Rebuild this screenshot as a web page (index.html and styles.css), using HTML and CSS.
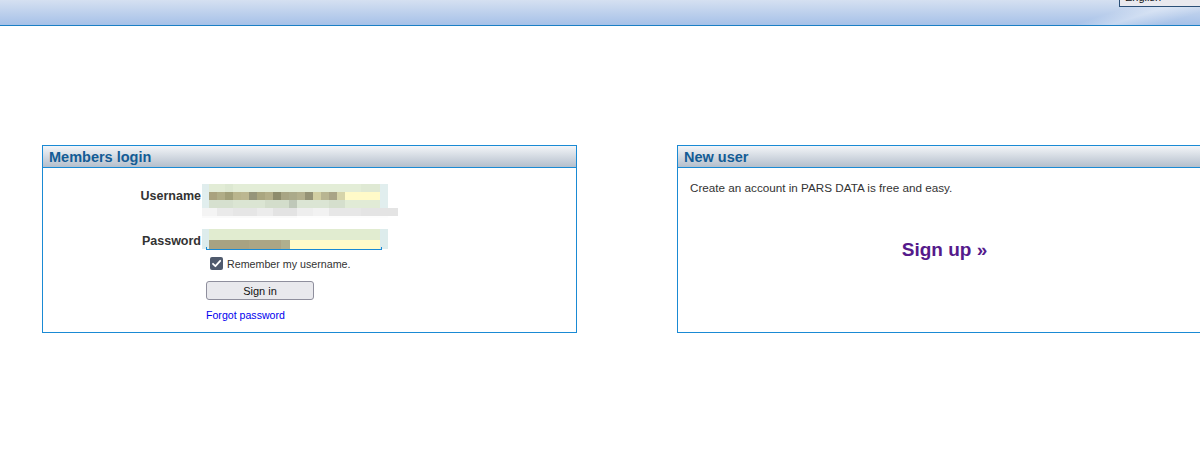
FILE: index.html
```html
<!DOCTYPE html>
<html lang="en">
<head>
    <meta charset="UTF-8">
    <title>Members login</title>
    <link rel="stylesheet" href="styles.css">
</head>
<body>
    <header class="topbar">
        <div class="lang-select">English</div>
    </header>

    <div class="panels">
        <div class="panel">
            <div class="panel-head">Members login</div>
            <div class="login-form">
                <label class="field-label user-label">Username</label>
                <div class="blur-field user-field">
                    <div class="blur-row u1"></div>
                    <div class="blur-row u2"></div>
                    <div class="blur-row u3"></div>
                    <div class="blur-row u4"></div>
                    <div class="blur-row u5"></div>
                </div>

                <label class="field-label pass-label">Password</label>
                <div class="blur-field pass-field">
                    <div class="blur-row p1"></div>
                    <div class="blur-row p2"></div>
                    <div class="focus-line"></div>
                </div>

                <div class="options">
                    <div class="remember">
                        <span class="checkbox">
                            <svg width="13" height="13" viewBox="0 0 13 13">
                                <rect x="0" y="0" width="13" height="13" rx="2" fill="#4f5a6d"/>
                                <path d="M3 6.8 L5.4 9.2 L10.2 3.8" stroke="#fff" stroke-width="1.8" fill="none" stroke-linecap="round" stroke-linejoin="round"/>
                            </svg>
                        </span>
                        <span>Remember my username.</span>
                    </div>
                    <button class="sign-in">Sign in</button>
                    <a class="forgot" href="#">Forgot password</a>
                </div>
            </div>
        </div>

        <div class="panel">
            <div class="panel-head">New user</div>
            <p class="intro">Create an account in PARS DATA is free and easy.</p>
            <div class="signup-wrap">
                <a class="signup" href="#">Sign up &raquo;</a>
            </div>
        </div>
    </div>
</body>
</html>
```

FILE: styles.css
```css
body {
    margin: 0;
    padding: 0;
    font-family: "Liberation Sans", Arial, sans-serif;
    color: #222;
    background: #fff;
    overflow: hidden;
}

.topbar {
    position: relative;
    height: 25px;
    border-bottom: 1px solid #1b7fc4;
    background:
        linear-gradient(162deg, transparent 0 90%, rgba(255,255,255,0.35) 93%, transparent 97%),
        linear-gradient(to bottom, #d5e0f1, #a6c1e8);
}

.lang-select {
    position: absolute;
    right: -14px;
    top: -10px;
    width: 88px;
    height: 15px;
    border: 1px solid #2b4f76;
    background: #e9e9ee;
    font-size: 11px;
    line-height: 13px;
    padding-left: 5px;
    color: #111;
}

.panels {
    display: flex;
    gap: 100px;
    padding: 119px 0 0 42px;
    width: 1300px;
}

.panel {
    width: 533px;
    height: 186px;
    border: 1px solid #1a8ad4;
    flex-shrink: 0;
}

.panel-head {
    height: 21px;
    border-bottom: 1px solid #1a8ad4;
    background: linear-gradient(to bottom, #f3f5f8, #b4bfcc);
    color: #135c95;
    font-weight: bold;
    font-size: 14.5px;
    line-height: 22px;
    padding-left: 6px;
}

.login-form {
    display: grid;
    grid-template-columns: 159px 200px;
    padding-top: 16px;
}

.field-label {
    font-weight: bold;
    font-size: 12.5px;
    color: #333;
    text-align: right;
    padding-right: 1px;
}

.user-label {
    padding-top: 5px;
}

.pass-label {
    margin-top: 11px;
    padding-top: 5px;
}

.blur-field {
    width: 186px;
    position: relative;
}

.pass-field {
    margin-top: 11px;
    height: 20px;
}

.blur-row {
    height: 8px;
}

.u1 {
    background: linear-gradient(to right, #e0eded 0 7px, #e2ecd6 7px 23px, #dde8d2 23px 31px, #e3edd7 31px 159px, #dfe9d4 159px 178px, #e1eeee 178px 186px);
}

.u2 {
    background: linear-gradient(to right, #e1eeee 0 7px, #a9a27e 7px 15px, #b0ad87 15px 23px, #a19f79 23px 31px, #b9b58d 31px 39px, #bcb791 39px 47px, #96957a 47px 55px, #aaa680 55px 63px, #b3ae88 63px 71px, #8e8c6c 71px 79px, #a8a584 79px 87px, #abaa8a 87px 95px, #b3b08e 95px 103px, #959376 103px 111px, #d1cea2 111px 119px, #b8b592 119px 127px, #a9a487 127px 135px, #d6d4aa 135px 143px, #fffac8 143px 178px, #e1eeee 178px 186px);
}

.u3 {
    background: linear-gradient(to right, #e1eeee 0 7px, #d6e0cf 7px 31px, #dbe5d3 31px 63px, #d3ddcb 63px 87px, #bfc8b9 87px 95px, #dbe5d4 95px 127px, #d5dfcd 127px 143px, #e1ebd6 143px 178px, #e1eeee 178px 186px);
}

.u4 {
    width: 196px;
    background: linear-gradient(to right, #f4f4f4 0 15px, #eaeaea 15px 31px, #e6e6e6 31px 55px, #ececec 55px 71px, #e3e3e3 71px 95px, #eeeeee 95px 111px, #f2f2f2 111px 127px, #e7e7e7 127px 159px, #e4e4e4 159px 196px);
}

.u5 {
    height: 2px;
    background: linear-gradient(to right, #fafafa 0 95px, #fdfdfd 95px 186px);
}

.p1 {
    height: 11px;
    background: linear-gradient(to right, #ddecec 0 7px, #e1ecd0 7px 178px, #ddecec 178px 186px);
}

.p2 {
    height: 9px;
    background: linear-gradient(to right, #ddecec 0 7px, #a8a282 7px 47px, #aca585 47px 79px, #b0af8e 79px 88px, #fffbc9 88px 178px, #ddecec 178px 186px);
}

.focus-line {
    position: absolute;
    left: 4px;
    bottom: -1px;
    width: 174px;
    height: 2px;
    border: 1px solid #1a8ad4;
    border-top: none;
}

.options {
    grid-column: 2;
    font-size: 10.7px;
    color: #333;
    display: flex;
    flex-direction: column;
    align-items: flex-start;
}

.remember {
    display: flex;
    align-items: center;
    gap: 4px;
    margin: 8px 0 0 8px;
    height: 13px;
}

.checkbox {
    display: flex;
}

.sign-in {
    margin: 11px 0 0 4px;
    width: 108px;
    height: 19px;
    border: 1px solid #8f8f9d;
    border-radius: 3px;
    background: #e9e9ed;
    font-family: "Liberation Sans", Arial, sans-serif;
    font-size: 11px;
    color: #111;
    padding: 0;
}

.forgot {
    margin: 9px 0 0 4px;
    font-size: 10.6px;
    color: #0000ee;
    text-decoration: none;
}

.intro {
    margin: 13px 0 0 12px;
    font-size: 11.7px;
    color: #333;
}

.signup-wrap {
    text-align: center;
    margin-top: 45px;
}

.signup {
    font-size: 19px;
    font-weight: bold;
    color: #551a8b;
    text-decoration: none;
}
```
